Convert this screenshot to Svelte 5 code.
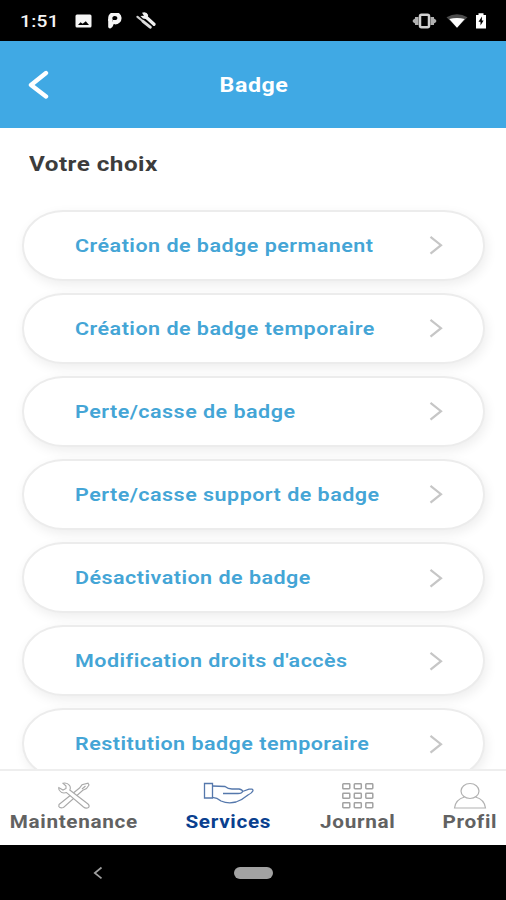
<script>
  const choices = [
    'Création de badge permanent',
    'Création de badge temporaire',
    'Perte/casse de badge',
    'Perte/casse support de badge',
    'Désactivation de badge',
    "Modification droits d'accès",
    'Restitution badge temporaire',
  ]
</script>

<div class="phone">
  <div class="status">
    <span class="clock">1:51</span>
    <svg class="photo" width="17" height="14" viewBox="0 0 17 14">
      <rect x="0.5" y="0.5" width="16" height="13" rx="1.5" fill="#f6f6f6" />
      <path d="M3 11 L5.5 8.3 L7.7 9.8 L10.8 7.3 L14 11Z" fill="#000" />
    </svg>
    <svg class="parking" width="15" height="16" viewBox="0 0 15 16">
      <path d="M3.3 9 V6.5 A4.6 4.2 0 1 1 8 10.2" fill="none" stroke="#f6f6f6" stroke-width="4.2" transform="translate(0 -0.9)" />
      <path d="M1.2 6 V14 Q1.5 15.6 3.3 15.4 Q5.8 14.8 6.5 11.3 L9 11 V7 H6 L5.4 9 V6Z" fill="#f6f6f6" />
    </svg>
    <svg class="tools" width="20" height="17" viewBox="0 0 20 17">
      <path d="M9.5 4.5 L18 12.3" fill="none" stroke="#f0f0f0" stroke-width="3.2" stroke-linecap="round" />
      <path d="M6 0.8 Q10.5 -0.7 12.2 3 L11 7.2 L7 6.4 L4.5 4 L8 3.8Z" fill="#f0f0f0" />
      <path d="M1.5 4.8 L6 8.5" fill="none" stroke="#ccc" stroke-width="2.2" stroke-linecap="round" />
      <path d="M7 9.3 L14.2 15.2" fill="none" stroke="#ddd" stroke-width="3" stroke-linecap="round" />
    </svg>
    <svg class="vibrate" width="25" height="16" viewBox="0 0 25 16">
      <path d="M0.8 7 L3 5.5 V4 H6.5 V12 H3 V10.5 L0.8 9Z M24.2 7 L22 5.5 V4 H18.5 V12 H22 V10.5 L24.2 9Z" fill="#b0b0b0" />
      <rect x="8" y="1.8" width="9" height="12.4" rx="1.5" fill="#000" stroke="#d0d0d0" stroke-width="2.5" />
    </svg>
    <svg class="wifi" width="22" height="14" viewBox="0 0 22 14">
      <path d="M0.5 3.3 Q11 -2.7 21.5 3.3 L11 13.8Z" fill="#4c4c4c" />
      <path d="M3.3 5 Q11 3 18.7 5 L11 13.7Z" fill="#fff" />
    </svg>
    <svg class="battery" width="12" height="16" viewBox="0 0 12 16">
      <path d="M1 2 H3.5 V0.3 H8.5 V2 H11 V15.5 H1Z" fill="#fff" />
      <path d="M7 3.5 L3.5 8.8 H5.5 V12.5 L8.6 7.5 H6.8Z" fill="#000" />
    </svg>
  </div>

  <header>
    <svg class="back" width="22" height="30" viewBox="0 0 22 30">
      <path d="M18 3 L3 15 L18 26.5" fill="none" stroke="#fff" stroke-width="4.4" stroke-linecap="round" stroke-linejoin="round" />
    </svg>
    <h1>Badge</h1>
  </header>

  <main>
    <h2>Votre choix</h2>
    <ul>
      {#each choices as choice}
        <li>
          <span>{choice}</span>
          <svg width="14" height="20" viewBox="0 0 14 20">
            <path d="M1.5 1.8 L12 10.2 L1.5 18.7" fill="none" stroke="#c6c6c6" stroke-width="2.2" />
          </svg>
        </li>
      {/each}
    </ul>
  </main>

  <nav>
    <div class="tab maintenance">
      <svg width="34" height="28" viewBox="0 0 34 28" fill="#fff" stroke="#a9a9a9" stroke-width="1.1">
        <path d="M2 22.5 L22.5 6 L25 2.8 L31 1.2 L32 3 L29.5 6.5 L25.8 8.3 L6.5 25.5 Q3 26.5 1.8 24.5Z" />
        <path d="M6 1.2 Q10 0.2 12.5 3.3 Q14 5.6 12.8 8 L31 22 Q33 24 31.5 25.5 Q29 27 26.5 25 L9.5 10.5 Q5 12 2.5 8.5 Q1.5 7 1.8 5.5 L6 8 L9 6.5 V4Z" />
        <path d="M25 7 L28.5 4" fill="none" />
      </svg>
      <span>Maintenance</span>
    </div>
    <div class="tab services active">
      <svg width="52" height="28" viewBox="0 0 52 28" fill="none" stroke="#5578ac" stroke-width="1.3">
        <path d="M1.5 1.5 H9.5 V16 H1.5Z" />
        <path d="M9.5 4 L22 4.5 Q25 7 29 7 H36 Q40 8 39.5 9.5 Q39 11.5 35 11.5 H20 M39.5 9.5 L46 7.2 Q50 6.5 50 8.7 Q49 11 45 13 Q39 18 33 20 Q25 22 18 19 Q14 15.5 9.5 15.3" />
      </svg>
      <span>Services</span>
    </div>
    <div class="tab journal">
      <svg width="34" height="28" viewBox="0 0 34 28" fill="none" stroke="#a2a2a2" stroke-width="1.5">
        {#each [1.8, 11.3, 20.7] as y}
          {#each [1.8, 13.3, 24.8] as x}
            <rect {x} {y} width="7" height="5" rx="0.7" />
          {/each}
        {/each}
      </svg>
      <span>Journal</span>
    </div>
    <div class="tab profil">
      <svg width="34" height="28" viewBox="0 0 34 28" fill="none" stroke="#b2b2b2" stroke-width="1.2">
        <ellipse cx="17" cy="9" rx="9" ry="7.5" />
        <path d="M11.5 15 Q2.5 17.5 1.5 26 H32.5 Q31.5 17.5 22.5 15" />
      </svg>
      <span>Profil</span>
    </div>
  </nav>

  <div class="system">
    <svg width="10" height="14" viewBox="0 0 10 14">
      <path d="M8.5 1.5 L1.8 7 L8.5 12.3" fill="none" stroke="#a0a0a0" stroke-width="1.7" />
    </svg>
    <div class="home"></div>
  </div>
</div>

<style>
:global(body) {
  margin: 0;
  background: #fff;
}
.phone {
  width: 506px;
  height: 900px;
  display: flex;
  flex-direction: column;
  overflow: hidden;
  font-family: Roboto, sans-serif;
}
svg {
  display: block;
  flex: none;
}
.status {
  height: 41px;
  box-sizing: border-box;
  display: flex;
  align-items: center;
  padding-left: 20px;
  padding-right: 19px;
  background: #000;
}
.clock {
  width: 55px;
  color: #f5f5f5;
  font-size: 17px;
  font-weight: 500;
  letter-spacing: 0.3px;
  transform: scaleX(1.125);
  transform-origin: left;
}
.parking {
  margin-left: 15px;
}
.tools {
  margin-left: 14px;
}
.vibrate {
  margin-left: auto;
}
.wifi {
  margin-left: 9px;
}
.battery {
  margin-left: 7px;
}
header {
  height: 87px;
  box-sizing: border-box;
  display: grid;
  grid-template-columns: 58px 1fr 56px;
  align-items: center;
  background: #40a9e4;
}
.back {
  margin-left: 28px;
}
h1 {
  margin: 0;
  color: #fff;
  text-align: center;
  font-size: 20px;
  font-weight: 700;
  letter-spacing: 0.5px;
  transform: scaleX(1.16);
}
main {
  height: 641px;
  overflow: hidden;
}
h2 {
  margin: 24px 0 32.5px 29px;
  color: #3c3c3c;
  font-size: 21px;
  line-height: 25px;
  font-weight: 700;
  letter-spacing: 0.4px;
  transform: scaleX(1.155);
  transform-origin: left;
}
ul {
  list-style: none;
  margin: 0;
  padding: 0 21.5px 0 22px;
  display: flex;
  flex-direction: column;
  gap: 12.15px;
}
li {
  height: 71px;
  box-sizing: border-box;
  display: flex;
  align-items: center;
  justify-content: space-between;
  padding: 0 39.5px 0 51px;
  border: 2px solid #ececec;
  border-radius: 41px / 35px;
  background: #fff;
  box-shadow: 2px 4px 12px rgba(0, 0, 0, 0.07);
}
li span {
  color: #44a5d6;
  font-size: 18px;
  font-weight: 600;
  letter-spacing: 0.4px;
  white-space: nowrap;
  transform: scaleX(1.195);
  transform-origin: left;
}
nav {
  height: 76px;
  box-sizing: border-box;
  display: grid;
  grid-template-columns: 148px 161px 97px 127px;
  border-top: 2px solid #eee;
  background: #fff;
  color: #626262;
}
.tab {
  display: flex;
  flex-direction: column;
  align-items: center;
  padding-top: 11px;
}
.tab span {
  font-size: 18px;
  line-height: 23px;
  font-weight: 700;
  letter-spacing: 0.6px;
  transform: scaleX(1.15);
}
.active {
  color: #0a3f8f;
}
.system {
  height: 55px;
  display: flex;
  align-items: center;
  padding-left: 93px;
  background: #000;
}
.home {
  width: 39px;
  height: 12px;
  margin-left: 131px;
  border-radius: 6px;
  background: #a2a2a2;
}
</style>
